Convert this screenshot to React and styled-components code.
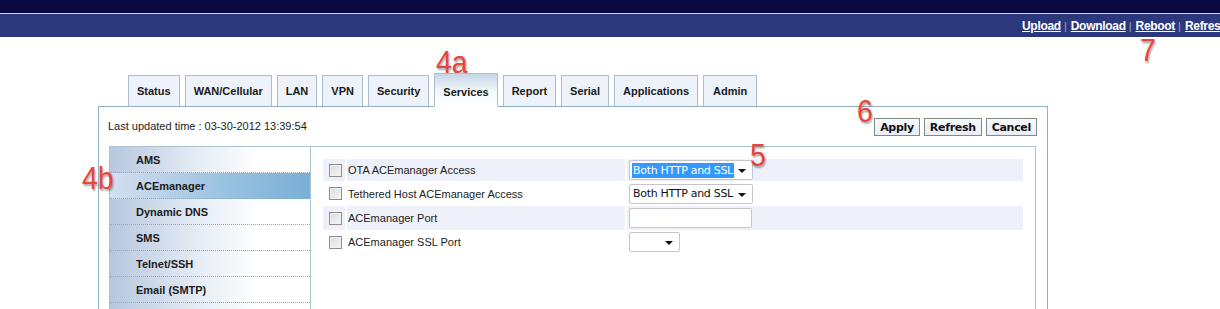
import React from 'react';
import styled, { createGlobalStyle } from 'styled-components';

const GlobalStyle = createGlobalStyle`
  body {
    margin: 0;
    background: #fff;
    font-family: "Liberation Sans", Arial, sans-serif;
    overflow: hidden;
  }
`;

const Page = styled.div`
  position: relative;
  width: 1220px;
  height: 309px;
  overflow: hidden;
`;

const TopBar = styled.div`
  height: 13px;
  background: #070940;
  border-bottom: 1px solid #c9d2ea;
`;

const NavBar = styled.div`
  height: 23px;
  background: #2b397c;
  display: flex;
  align-items: center;
  padding-left: 1022px;
  white-space: nowrap;
`;

const NavLink = styled.a`
  color: #fff;
  font-size: 12px;
  font-weight: bold;
  text-decoration: underline;
  letter-spacing: -0.3px;
`;

const Sep = styled.span`
  color: #9aa3c8;
  font-size: 11px;
  margin: 0 4px 0 3px;
`;

const Main = styled.div`
  padding: 36px 0 0 98px;
`;

const Tabs = styled.div`
  display: flex;
  align-items: flex-end;
  gap: 5px;
  margin-left: 30px;
  position: relative;
  z-index: 1;
`;

const Tab = styled.div`
  height: ${p => (p.$active ? '34px' : '31px')};
  padding: 0 ${p => p.$pad || 8}px;
  display: flex;
  align-items: center;
  justify-content: center;
  font-size: 11px;
  font-weight: bold;
  color: #1a1a1a;
  border: 1px solid #a9bfcd;
  border-bottom: ${p => (p.$active ? '1px solid #fff' : 'none')};
  background: ${p =>
    p.$active
      ? 'linear-gradient(#c5d6e6, #f4f8fb 55%, #fff)'
      : '#edf2fb'};
  margin-bottom: ${p => (p.$active ? '-1px' : '0')};
  padding-top: ${p => (p.$active ? '4px' : '0')};
  box-sizing: border-box;
`;

const Panel = styled.div`
  width: 950px;
  height: 210px;
  box-sizing: border-box;
  border: 1px solid #8fb1c3;
  border-bottom: none;
  padding: 0 10px 0 10px;
`;

const Toolbar = styled.div`
  height: 39px;
  display: flex;
  justify-content: space-between;
  align-items: flex-start;
  padding-top: 11px;
  box-sizing: border-box;
`;

const Updated = styled.div`
  font-size: 11px;
  color: #222;
  margin-top: 2px;
  margin-left: -1px;
`;

const Buttons = styled.div`
  display: flex;
  gap: 4px;
`;

const Button = styled.button`
  height: 18px;
  padding: 0 5px;
  font-family: "DejaVu Sans", sans-serif;
  font-size: 11px;
  font-weight: bold;
  letter-spacing: -0.3px;
  color: #111;
  border: 1px solid #7f8c80;
  background: linear-gradient(#f6f8fc, #e9edf7);
  line-height: 15px;
`;

const Inner = styled.div`
  display: flex;
  border: 1px solid #a9c3d0;
  border-bottom: none;
  height: 170px;
  margin-right: 1px;
`;

const SideNav = styled.div`
  width: 200px;
  border-right: 1px solid #a9c3d0;
  flex-shrink: 0;
`;

const NavItem = styled.div`
  height: 26px;
  box-sizing: border-box;
  display: flex;
  align-items: center;
  padding-left: 26px;
  font-size: 11px;
  font-weight: bold;
  color: #1b1b1b;
  border-bottom: 1px dotted #9aa5b8;
  background: ${p =>
    p.$active
      ? 'linear-gradient(to right, #d3e0ef, #9cc3e2 55%, #79afd6)'
      : 'linear-gradient(to right, #b6c7de, #e6edf5 45%, #fff 75%)'};
`;

const Content = styled.div`
  flex: 1;
  padding: 12px 12px 0 12px;
`;

const Grid = styled.div`
  display: grid;
  grid-template-columns: 22px 278px 1fr;
  column-gap: 2px;
`;

const Cell = styled.div`
  height: ${p => p.$h || 24}px;
  display: flex;
  align-items: center;
  background: ${p => (p.$shade ? '#eef0fa' : '#fff')};
  font-size: 11px;
  color: #222;
`;

const CheckCell = styled(Cell)`
  justify-content: center;
  padding-left: 2px;
`;

const Check = styled.span`
  width: 11px;
  height: 11px;
  border: 1px solid #8e8f8f;
  background: linear-gradient(135deg, #dcdcdc, #f5f5f5);
  box-shadow: inset 0 0 0 1px #f0f0f0;
`;

const Label = styled(Cell)`
  padding-left: 1px;
`;

const ValueCell = styled(Cell)`
  padding-left: 2px;
`;

const Select = styled.div`
  width: ${p => p.$w || 124}px;
  height: 20px;
  box-sizing: border-box;
  border: 1px solid #c3c6cc;
  border-radius: 2px;
  background: #fff;
  display: flex;
  align-items: center;
  padding-left: 2px;
  position: relative;
  font-family: "DejaVu Sans", sans-serif;
  font-size: 11px;
  letter-spacing: -0.3px;
  color: #111;
  &::after {
    content: '';
    position: absolute;
    right: 6px;
    top: 8px;
    border-left: 4px solid transparent;
    border-right: 4px solid transparent;
    border-top: 4px solid #111;
  }
`;

const Chosen = styled.span`
  padding: 1px 1px;
  background: ${p => (p.$focus ? '#3399ff' : 'transparent')};
  color: ${p => (p.$focus ? '#fff' : '#111')};
`;

const TextInput = styled.div`
  width: 123px;
  height: 20px;
  box-sizing: border-box;
  border: 1px solid #c3c6cc;
  border-radius: 2px;
  background: #fff;
`;

const Marker = styled.div`
  position: absolute;
  left: ${p => p.$x}px;
  top: ${p => p.$y}px;
  font-family: "Liberation Sans", Arial, sans-serif;
  font-size: 31px;
  color: #e8453d;
  line-height: 1;
  text-shadow: 1px 2px 2px rgba(0, 0, 0, 0.35);
  transform: scaleX(0.92);
  transform-origin: left top;
`;

const tabs = [
  ['Status', 8], ['WAN/Cellular', 8], ['LAN', 8], ['VPN', 8], ['Security', 8],
  ['Services', 8, true], ['Report', 8], ['Serial', 8], ['Applications', 8], ['Admin', 9],
];

const services = ['AMS', 'ACEmanager', 'Dynamic DNS', 'SMS', 'Telnet/SSH', 'Email (SMTP)', ''];

const rows = [
  { label: 'OTA ACEmanager Access', h: 22, value: <Select><Chosen $focus>Both HTTP and SSL</Chosen></Select> },
  { label: 'Tethered Host ACEmanager Access', h: 25, value: <Select><Chosen>Both HTTP and SSL</Chosen></Select> },
  { label: 'ACEmanager Port', h: 24, value: <TextInput /> },
  { label: 'ACEmanager SSL Port', h: 24, value: <Select $w={51} /> },
];

export default function App() {
  return (
    <Page>
      <GlobalStyle />
      <TopBar />
      <NavBar>
        <NavLink>Upload</NavLink><Sep>|</Sep>
        <NavLink>Download</NavLink><Sep>|</Sep>
        <NavLink>Reboot</NavLink><Sep>|</Sep>
        <NavLink>Refresh</NavLink>
      </NavBar>
      <Main>
        <Tabs>
          {tabs.map(([t, pad, active]) => (
            <Tab key={t} $pad={pad} $active={active}>{t}</Tab>
          ))}
        </Tabs>
        <Panel>
          <Toolbar>
            <Updated>Last updated time : 03-30-2012 13:39:54</Updated>
            <Buttons>
              <Button>Apply</Button>
              <Button>Refresh</Button>
              <Button>Cancel</Button>
            </Buttons>
          </Toolbar>
          <Inner>
            <SideNav>
              {services.map((s, i) => (
                <NavItem key={i} $active={s === 'ACEmanager'}>{s}</NavItem>
              ))}
            </SideNav>
            <Content>
              <Grid>
                {rows.map((r, i) => (
                  <React.Fragment key={r.label}>
                    <CheckCell $h={r.h} $shade={i % 2 === 0}><Check /></CheckCell>
                    <Label $h={r.h} $shade={i % 2 === 0}>{r.label}</Label>
                    <ValueCell $h={r.h} $shade={i % 2 === 0}>{r.value}</ValueCell>
                  </React.Fragment>
                ))}
              </Grid>
            </Content>
          </Inner>
        </Panel>
      </Main>
      <Marker $x={436} $y={47}>4a</Marker>
      <Marker $x={82} $y={163}>4b</Marker>
      <Marker $x={750} $y={140}>5</Marker>
      <Marker $x={857} $y={96}>6</Marker>
      <Marker $x={1140} $y={35}>7</Marker>
    </Page>
  );
}
